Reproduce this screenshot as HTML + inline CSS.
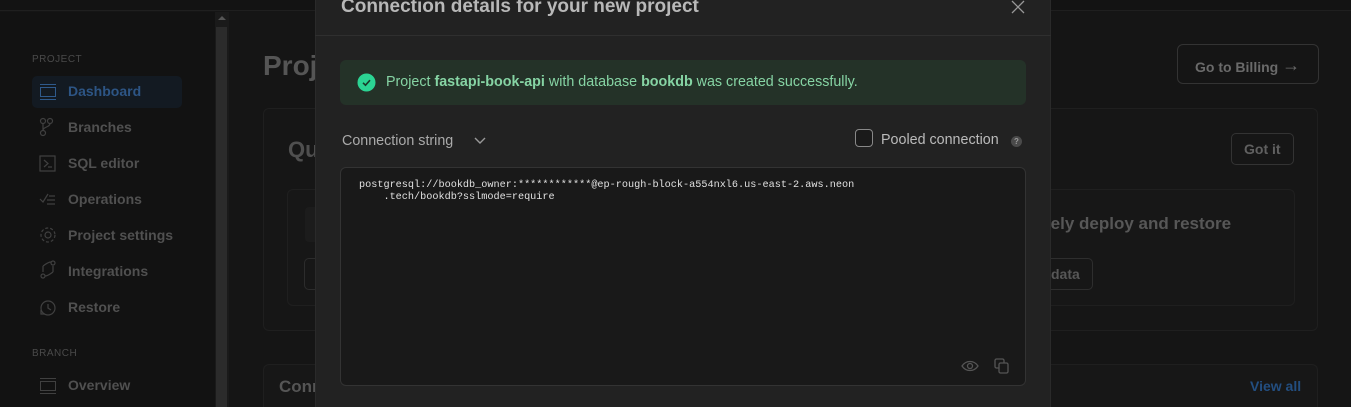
<!DOCTYPE html>
<html style="overflow:hidden"><head><style>
*{box-sizing:border-box;margin:0;padding:0}
html,body{width:1351px;height:407px;overflow:hidden}
body{background:#151515;font-family:"Liberation Sans",sans-serif;position:relative}
.a{position:absolute}
.nav{color:#505050;font-size:14px;font-weight:bold}
.sec{color:#4a4a4a;font-size:10px;letter-spacing:.5px}
</style></head><body>
<div class="a" style="left:0;top:0;width:1351px;height:11px;background:#131313;border-bottom:1px solid #1f1f1f"></div>
<div class="a" style="left:0;top:12px;width:215px;height:395px;background:#121212"></div>
<div class="a" style="left:215px;top:12px;width:14px;height:395px;background:#1a1a1a"></div>
<div class="a" style="left:216px;top:27px;width:11px;height:380px;background:#2b2b2b"></div>
<div class="a" style="left:218px;top:16px;width:0;height:0;border-left:4px solid transparent;border-right:4px solid transparent;border-bottom:4px solid #555"></div>

<div class="a sec" style="left:32px;top:54px">PROJECT</div>
<div class="a" style="left:32px;top:76px;width:150px;height:32px;background:#131a22;border-radius:5px"></div>
<div class="a" style="left:40px;top:84px;width:16px;height:16px;border-top:1px solid #2f5a8c;border-bottom:1px solid #2f5a8c"><div style="margin-top:2px;height:10px;border:1px solid #2f5a8c"></div></div>
<div class="a nav" style="left:68px;top:83px;color:#2d5585">Dashboard</div>
<div class="a nav" style="left:68px;top:119px">Branches</div>
<div class="a nav" style="left:68px;top:155px">SQL editor</div>
<div class="a nav" style="left:68px;top:191px">Operations</div>
<div class="a nav" style="left:68px;top:227px">Project settings</div>
<div class="a nav" style="left:68px;top:263px">Integrations</div>
<div class="a nav" style="left:68px;top:299px">Restore</div>
<svg class="a" style="left:38px;top:116px" width="20" height="200" fill="none" stroke="#404040" stroke-width="1.2">
<circle cx="5" cy="5" r="2.5"/><circle cx="12" cy="5" r="2.5"/><circle cx="5" cy="17" r="2.5"/><path d="M5 7.5v7M12 7.5c0 4-7 3-7 7"/>
<rect x="2" y="40" width="15" height="15"/><path d="M6 44l4 3.5-4 3.5M10 51h4"/>
<path d="M2 83l3 3 5-8M11 80h6M9 84h8M9 88h8"/>
<circle cx="10" cy="119" r="3"/><circle cx="10" cy="119" r="7" stroke-dasharray="3 2"/>
<path d="M5 150v6M15 150v6M5 150c3-2 5-4 8-4M15 156c-3 2-5 4-8 4"/><circle cx="5" cy="160" r="2"/><circle cx="15" cy="147" r="2"/>
<circle cx="10" cy="192" r="7"/><path d="M10 188v4l3 2M3 194l0 4 4 0"/>
</svg>
<div class="a sec" style="left:32px;top:348px">BRANCH</div>
<div class="a" style="left:40px;top:378px;width:16px;height:16px;border-top:1px solid #404040;border-bottom:1px solid #404040"><div style="margin-top:2px;height:10px;border:1px solid #404040"></div></div>
<div class="a nav" style="left:68px;top:377px">Overview</div>

<div class="a" style="left:263px;top:50px;font-size:28px;font-weight:bold;color:#555">Proj</div>
<div class="a" style="left:263px;top:108px;width:1055px;height:223px;border:1px solid #1f1f1f;border-radius:6px;background:#161616"></div>
<div class="a" style="left:288px;top:137px;font-size:22px;font-weight:bold;color:#4f4f4f">Qu</div>
<div class="a" style="left:287px;top:189px;width:1008px;height:117px;border:1px solid #1f1f1f;border-radius:6px;background:#171717"></div>
<div class="a" style="left:305px;top:207px;width:20px;height:35px;background:#1c1c1c;border-radius:4px"></div>
<div class="a" style="left:304px;top:258px;width:20px;height:32px;border:1px solid #2c2c2c;border-radius:5px"></div>
<div class="a" style="left:1177px;top:44px;width:142px;height:40px;border:1px solid #333;border-radius:6px;color:#6a6a6a;font-size:14px;font-weight:bold;padding:11px 0 0 17px">Go to Billing <span style="font-weight:normal;font-size:18px;position:relative;top:-1px">→</span></div>
<div class="a" style="left:1231px;top:133px;width:63px;height:32px;border:1px solid #333;border-radius:5px;color:#606060;font-size:14px;font-weight:bold;padding:7px 0 0 12px">Got it</div>
<div class="a" style="left:1045px;top:214px;font-size:17px;font-weight:bold;color:#575757">fely deploy and restore</div>
<div class="a" style="left:1020px;top:258px;width:73px;height:32px;border:1px solid #2e2e2e;border-radius:5px;color:#575757;font-size:14px;font-weight:bold;padding:7px 0 0 30px">data</div>
<div class="a" style="left:263px;top:364px;width:1055px;height:43px;border:1px solid #1f1f1f;border-bottom:none;border-radius:6px 6px 0 0;background:#171717"></div>
<div class="a" style="left:279px;top:377px;font-size:17px;font-weight:bold;color:#555">Conn</div>
<div class="a" style="left:1250px;top:378px;font-size:14px;font-weight:bold;color:#234e80">View all</div>

<div class="a" style="left:315px;top:0;width:736px;height:407px;background:#222;border-left:1px solid #2a2a2a;border-right:1px solid #2a2a2a"></div>
<div class="a" style="left:315px;top:35px;width:736px;height:1px;background:#2f2f2f"></div>
<div class="a" style="left:341px;top:-4px;font-size:19px;font-weight:bold;color:#b8b8b8">Connection details for your new project</div>
<svg class="a" style="left:1011px;top:0" width="14" height="14" stroke="#999" stroke-width="1.3"><path d="M1 1l12 12M13 1L1 13"/></svg>
<div class="a" style="left:340px;top:60px;width:686px;height:45px;background:#243228;border-radius:6px"></div>
<svg class="a" style="left:357px;top:73px" width="19" height="19"><circle cx="9.5" cy="9.5" r="9" fill="#2bd493"/><path d="M6 9.8l2.5 2.4 4.5-5" stroke="#1a3a2a" stroke-width="1.6" fill="none"/></svg>
<div class="a" style="left:386px;top:74px;font-size:14.3px;color:#86d4a4">Project <b>fastapi-book-api</b> with database <b>bookdb</b> was created successfully.</div>
<div class="a" style="left:342px;top:133px;font-size:14.3px;color:#aaa">Connection string</div>
<svg class="a" style="left:473px;top:136px" width="14" height="10" stroke="#999" stroke-width="1.4" fill="none"><path d="M2 2l5 5 5-5"/></svg>
<div class="a" style="left:855px;top:129px;width:18px;height:18px;border:1px solid #888;border-radius:4px;background:#1a1a1a"></div>
<div class="a" style="left:881px;top:132px;font-size:14.3px;color:#bbb">Pooled connection</div>
<div class="a" style="left:1011px;top:136px;width:11px;height:11px;border-radius:50%;background:#4a4a4a;color:#999;font-size:8px;text-align:center;line-height:11px;font-weight:bold">?</div>
<div class="a" style="left:340px;top:167px;width:686px;height:219px;background:#191919;border:1px solid #333;border-radius:6px"></div>
<div class="a" style="left:359px;top:180px;font-family:'Liberation Mono',monospace;font-size:10.2px;line-height:12px;color:#e0e0e0;white-space:pre">postgresql://bookdb_owner:************@ep-rough-block-a554nxl6.us-east-2.aws.neon
    .tech/bookdb?sslmode=require</div>
<svg class="a" style="left:961px;top:358px" width="50" height="18" fill="none" stroke="#555" stroke-width="1.3"><path d="M1 8c4-6 12-6 16 0c-4 6-12 6-16 0z"/><circle cx="9" cy="8" r="2.5"/><rect x="34" y="1" width="9" height="9" rx="1.5"/><rect x="38" y="5" width="9" height="10" rx="1.5" fill="#191919"/></svg>
</body></html>
